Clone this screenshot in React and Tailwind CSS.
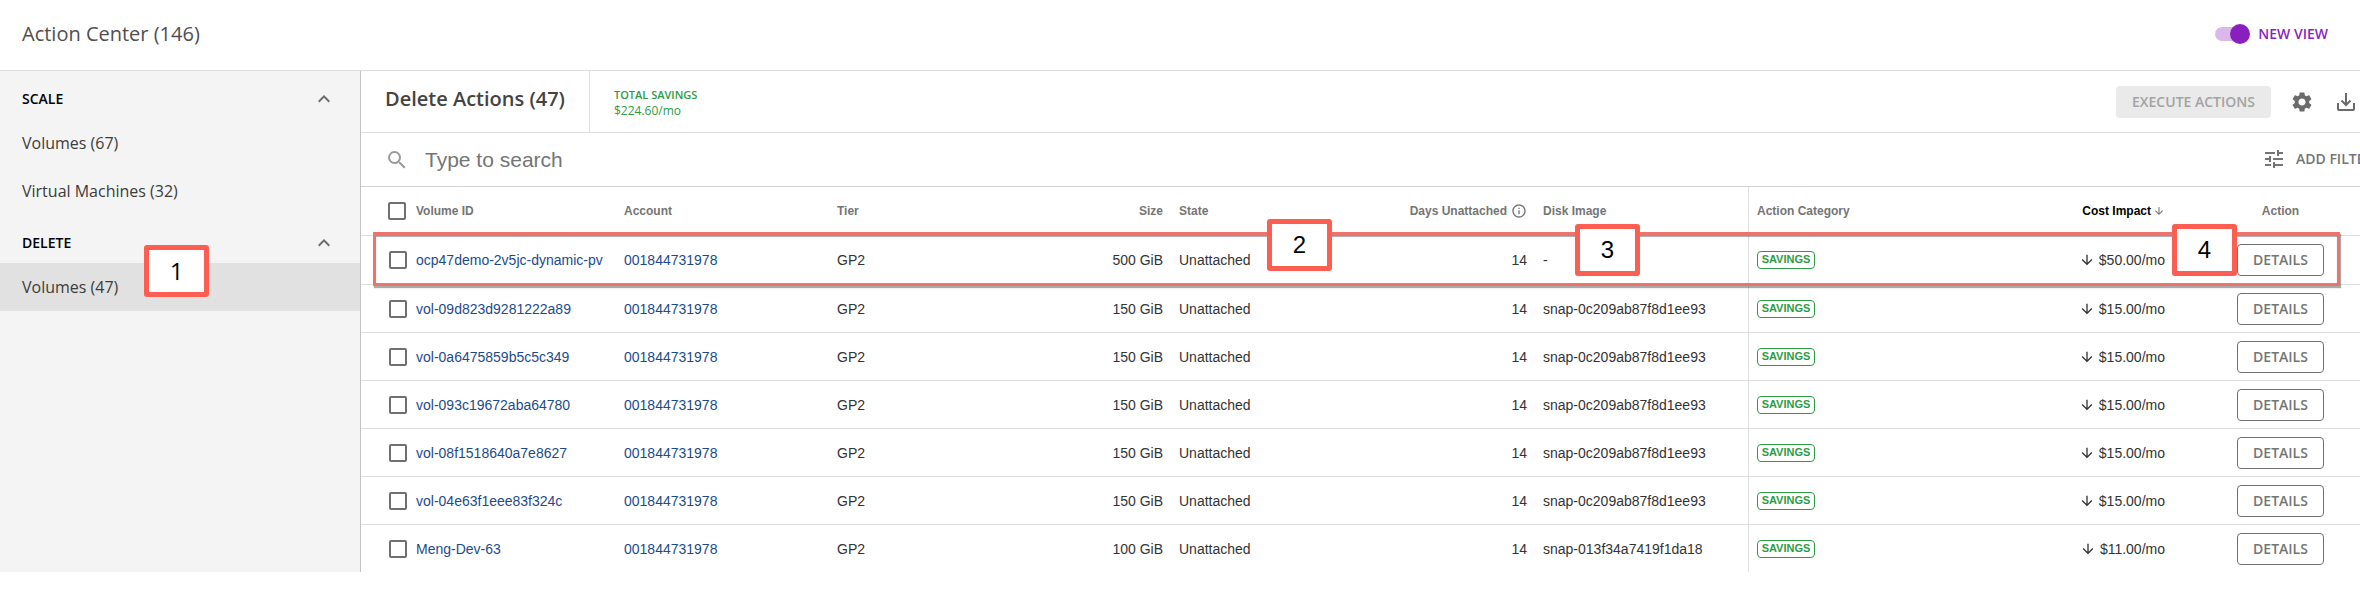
import React from "react";
import { MdSearch, MdSettings, MdTune, MdArrowDownward, MdInfoOutline, MdKeyboardArrowUp } from "react-icons/md";

const rows = [
  ["ocp47demo-2v5jc-dynamic-pv", "500 GiB", "-", "$50.00/mo"],
  ["vol-09d823d9281222a89", "150 GiB", "snap-0c209ab87f8d1ee93", "$15.00/mo"],
  ["vol-0a6475859b5c5c349", "150 GiB", "snap-0c209ab87f8d1ee93", "$15.00/mo"],
  ["vol-093c19672aba64780", "150 GiB", "snap-0c209ab87f8d1ee93", "$15.00/mo"],
  ["vol-08f1518640a7e8627", "150 GiB", "snap-0c209ab87f8d1ee93", "$15.00/mo"],
  ["vol-04e63f1eee83f324c", "150 GiB", "snap-0c209ab87f8d1ee93", "$15.00/mo"],
  ["Meng-Dev-63", "100 GiB", "snap-013f34a7419f1da18", "$11.00/mo"],
];

function Callout({ children, className }) {
  return (
    <div className={`absolute z-20 flex h-[52px] w-[65px] items-center justify-center rounded-[3px] border-[5px] border-[#fc5f51] bg-white text-2xl leading-6 text-black ${className}`}>
      {children}
    </div>
  );
}

function Check({ label }) {
  return (
    <input
      type="checkbox"
      aria-label={label}
      className="block size-[18px] appearance-none rounded-[2px] border-2 border-[#707070] bg-white checked:bg-[#707070]"
    />
  );
}

function NavGroup({ title, children }) {
  return (
    <section>
      <button className="flex h-12 w-full items-center justify-between pt-2 pr-6 pl-[22px] text-sm font-semibold text-black">
        {title}
        <MdKeyboardArrowUp className="size-6 text-[#6b6b6b]" />
      </button>
      {children}
    </section>
  );
}

function NavLink({ active, children }) {
  return (
    <a href="#" className={`flex h-12 items-center px-[22px] text-base text-[#3c3c3c] ${active ? "bg-[#e1e1e1]" : ""}`}>
      {children}
    </a>
  );
}

function Sidebar() {
  return (
    <nav className="relative w-[361px] shrink-0 border-r border-[#c4c4c4] bg-[#f4f4f4]">
      <NavGroup title="SCALE">
        <NavLink>Volumes (67)</NavLink>
        <NavLink>Virtual Machines (32)</NavLink>
      </NavGroup>
      <NavGroup title="DELETE">
        <NavLink active>Volumes (47)</NavLink>
      </NavGroup>
      <Callout className="top-[174px] left-[144px] font-['Open_Sans',sans-serif]">1</Callout>
    </nav>
  );
}

const th = "h-[49px] border-b border-[#dedede] px-2 text-left text-xs font-bold text-[#757575]";

function rowLine(i) {
  if (i === 0) return "h-[49px] border-b border-[#dedede]";
  if (i === rows.length - 1) return "h-[47px] border-[#dedede]";
  return "h-12 border-b border-[#dedede]";
}

function VolumeTable() {
  return (
    <table className="w-full table-fixed border-separate border-spacing-0 font-['Liberation_Sans',Arial,sans-serif] text-sm text-[#333]">
      <colgroup>
        <col className="w-[47px]" />
        <col className="w-[208px]" />
        <col className="w-[213px]" />
        <col className="w-[171px]" />
        <col className="w-[171px]" />
        <col className="w-[182px]" />
        <col className="w-[182px]" />
        <col className="w-[213px]" />
        <col className="w-[212px]" />
        <col className="w-[213px]" />
        <col className="w-[187px]" />
      </colgroup>
      <thead>
        <tr>
          <th className="h-[49px] border-b border-[#dedede] pl-[27px]"><Check label="Select all volumes" /></th>
          <th className={th}>Volume ID</th>
          <th className={th}>Account</th>
          <th className={th}>Tier</th>
          <th className={th}><div className="text-right">Size</div></th>
          <th className={th}>State</th>
          <th className={th}>
            <div className="flex items-center justify-end gap-1">Days Unattached <MdInfoOutline className="size-4" /></div>
          </th>
          <th className={th}>Disk Image</th>
          <th className={`${th} border-l`}>Action Category</th>
          <th className={th}>
            <div className="flex items-center justify-end gap-[2px] text-black">Cost Impact <MdArrowDownward className="size-3 text-[#757575]" /></div>
          </th>
          <th className={`${th} pl-16`}><div className="w-[87px] text-center">Action</div></th>
        </tr>
      </thead>
      <tbody>
        {rows.map(([id, size, image, cost], i) => {
          const td = `${rowLine(i)} px-2 py-0`;
          return (
            <tr key={id}>
              <td className={`${rowLine(i)} pl-7`}><Check label={`Select ${id}`} /></td>
              <td className={td}><a href="#" className="block overflow-hidden whitespace-nowrap text-[#1c4b8c]">{id}</a></td>
              <td className={td}><a href="#" className="text-[#1c4b8c]">001844731978</a></td>
              <td className={td}>GP2</td>
              <td className={`${td} text-right`}>{size}</td>
              <td className={td}>Unattached</td>
              <td className={`${td} text-right`}>14</td>
              <td className={td}>{image}</td>
              <td className={`${td} border-l`}>
                <span className="flex h-[18px] w-[58px] items-center justify-center rounded border border-[#2d9b45] text-[11px] font-bold text-[#2d9b45]">SAVINGS</span>
              </td>
              <td className={td}>
                <div className="flex items-center justify-end gap-1"><MdArrowDownward className="size-4" />{cost}</div>
              </td>
              <td className={`${td} pl-16`}>
                <button className="block h-8 w-[87px] rounded border border-[#707070] bg-white font-['Open_Sans',sans-serif] text-sm font-semibold text-[#757575]">DETAILS</button>
              </td>
            </tr>
          );
        })}
      </tbody>
    </table>
  );
}

function DownloadIcon() {
  return (
    <svg viewBox="0 0 24 24" className="size-6" fill="none" stroke="currentColor" strokeWidth="2">
      <path d="M4 13v6.2q0 .8.8.8h14.400q.8 0 .8-.8V13M12 3v12M7.500 10.500 12 15l4.500-4.500" />
    </svg>
  );
}

export default function App() {
  return (
    <div className="overflow-hidden bg-white font-['Open_Sans',sans-serif]">
      <header className="flex h-[71px] items-center justify-between border-b border-[#dedede] pr-8 pb-[2px] pl-[22px]">
        <h1 className="text-xl text-[#4f4f4f]">Action Center (146)</h1>
        <label className="flex items-center gap-2 text-sm font-semibold text-[#8a1fc0]">
          <span className="relative flex h-5 w-[35px] items-center">
            <input type="checkbox" role="switch" defaultChecked className="h-[14px] w-[34px] appearance-none rounded-full bg-[#dbb8ec]" />
            <span className="absolute top-0 right-0 size-5 rounded-full bg-[#8a1fc0]" />
          </span>
          NEW VIEW
        </label>
      </header>
      <div className="flex">
        <Sidebar />
        <main className="relative min-w-0 flex-1">
          <div className="flex h-[62px] border-b border-[#dedede]">
            <h2 className="border-r border-[#dedede] pt-[14px] pr-6 pl-6 text-xl font-semibold text-[#444]">Delete Actions (47)</h2>
            <div className="pt-4 pl-6 text-xs leading-4 text-[#2d9b45]">
              <div className="text-[11px] font-semibold">TOTAL SAVINGS</div>
              <div>$224.60/mo</div>
            </div>
            <div className="ml-auto flex items-center text-[#6b6b6b]">
              <button disabled className="h-8 w-[155px] rounded bg-[#eaeaea] text-sm font-semibold text-[#a3a3a3]">EXECUTE ACTIONS</button>
              <button aria-label="Settings" className="ml-[19px]"><MdSettings className="size-6" /></button>
              <button aria-label="Download" className="mr-[2px] ml-5"><DownloadIcon /></button>
            </div>
          </div>
          <div className="flex h-[54px] items-center overflow-hidden border-b border-[#d2d2d2] pl-6">
            <MdSearch className="size-6 text-[#9b9b9b]" />
            <input
              type="text"
              aria-label="Search"
              placeholder="Type to search"
              className="ml-4 min-w-0 flex-1 font-['Liberation_Sans',Arial,sans-serif] text-[21px] text-[#333] placeholder:text-[#757575]"
            />
            <button className="-mr-6 flex w-[122px] shrink-0 items-center gap-[10px] pb-[2px] text-sm font-semibold whitespace-nowrap text-[#757575]">
              <MdTune className="size-6 shrink-0" />
              ADD FILTERS
            </button>
          </div>
          <VolumeTable />
          <div className="pointer-events-none absolute top-[161px] right-5 left-3 z-10 h-[54px] border-[3px] border-[#ee736c] shadow-[1px_2px_1px_#0005,inset_0_2px_1px_#0005]" />
          <Callout className="top-[148px] left-[906px] font-['Liberation_Sans',Arial,sans-serif]">2</Callout>
          <Callout className="top-[153px] left-[1214px] font-['Liberation_Sans',Arial,sans-serif]">3</Callout>
          <Callout className="top-[153px] right-[123px] font-['Liberation_Sans',Arial,sans-serif]">4</Callout>
        </main>
      </div>
    </div>
  );
}
